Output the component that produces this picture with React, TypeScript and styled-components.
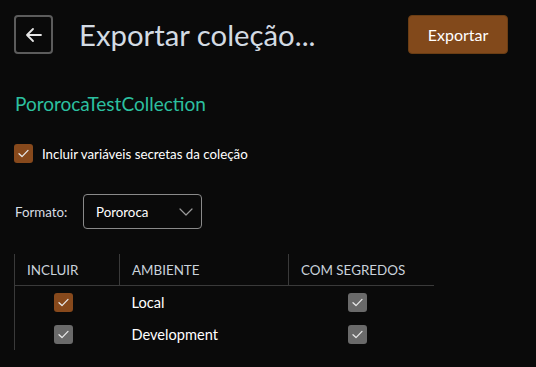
import React from "react";
import styled, { createGlobalStyle } from "styled-components";

const GlobalStyle = createGlobalStyle`
  html, body {
    margin: 0;
    padding: 0;
    background: #0a0a0a;
  }
  body {
    font-family: "Lato", "Noto Sans", sans-serif;
    color: #f2f2f2;
  }
`;

const Page = styled.div`
  width: 536px;
  height: 367px;
  box-sizing: border-box;
  padding: 15px 28px 0 14px;
  background: #0a0a0a;
  overflow: hidden;
`;

const Header = styled.div`
  display: flex;
  align-items: center;
  height: 39px;
`;

const BackButton = styled.button`
  width: 39px;
  height: 39px;
  box-sizing: border-box;
  border: 2px solid #5c5c5c;
  border-radius: 4px;
  background: transparent;
  display: flex;
  align-items: center;
  justify-content: center;
  padding: 0;
  cursor: pointer;
`;

const Title = styled.h1`
  margin: 0 0 0 26px;
  font-size: 29.3px;
  font-weight: 400;
  color: #d3dbe3;
  flex: 1;
`;

const PrimaryButton = styled.button`
  width: 100px;
  height: 39px;
  border: 1px solid #6a3d14;
  border-radius: 4px;
  background: #82491b;
  color: #ffffff;
  font-family: "Lato", sans-serif;
  font-size: 16px;
  cursor: pointer;
`;

const CollectionName = styled.div`
  margin-top: 38px;
  margin-left: 1px;
  font-size: 19px;
  color: #2cc0a0;
`;

const CheckRow = styled.label`
  display: flex;
  align-items: center;
  gap: 9px;
  margin-top: 29px;
  font-size: 13.3px;
  color: #ffffff;
`;

const Box = styled.span<{ $tone: "orange" | "gray"; $size: number }>`
  display: inline-flex;
  align-items: center;
  justify-content: center;
  width: ${(p) => p.$size}px;
  height: ${(p) => p.$size}px;
  border-radius: 3px;
  background: ${(p) => (p.$tone === "orange" ? "#87491c" : "#6a6a6a")};
  flex-shrink: 0;
  vertical-align: middle;
`;

const FormatRow = styled.div`
  display: flex;
  align-items: center;
  margin-top: 31px;
`;

const FormatLabel = styled.span`
  font-size: 13.3px;
  color: #d8dde2;
  margin-left: 1px;
  width: 68px;
`;

const Select = styled.div`
  width: 119px;
  height: 35px;
  box-sizing: border-box;
  border: 1px solid #8a8a8a;
  border-radius: 4px;
  display: flex;
  align-items: center;
  justify-content: space-between;
  padding: 0 8px 0 12px;
  font-size: 13.3px;
  color: #ffffff;
`;

const Table = styled.table`
  margin-top: 25px;
  border-collapse: collapse;
  table-layout: fixed;
  width: 419px;
  border-left: 1px solid #3a3a3a;
`;

const Th = styled.th`
  height: 31px;
  padding: 0 0 0 12px;
  text-align: left;
  font-weight: 400;
  font-size: 13.4px;
  color: #c9d2db;
  border-bottom: 1px solid #3a3a3a;
  & + & {
    border-left: 1px solid #3a3a3a;
  }
`;

const Td = styled.td<{ $center?: boolean }>`
  height: 32px;
  padding: ${(p) => (p.$center ? "0 7px 0 0" : "0 0 0 12px")};
  text-align: ${(p) => (p.$center ? "center" : "left")};
  vertical-align: middle;
  font-size: 14.6px;
  color: #ffffff;
`;

const Check = ({ color = "#e8e8e8" }: { color?: string }) => (
  <svg width="11" height="9" viewBox="0 0 11 9" fill="none">
    <path d="M1 4.8 L4 7.6 L10 1.4" stroke={color} strokeWidth="1.3" strokeLinecap="round" strokeLinejoin="round" />
  </svg>
);

const rows = [
  { name: "Local", include: true },
  { name: "Development", include: false },
];

export default function App() {
  return (
    <>
      <GlobalStyle />
      <Page>
        <Header>
          <BackButton aria-label="Voltar">
            <svg width="18" height="16" viewBox="0 0 18 16" fill="none">
              <path d="M16 8 H2 M8 2 L2 8 L8 14" stroke="#e6e6e6" strokeWidth="1.8" strokeLinecap="round" strokeLinejoin="round" />
            </svg>
          </BackButton>
          <Title>Exportar coleção...</Title>
          <PrimaryButton>Exportar</PrimaryButton>
        </Header>

        <CollectionName>PororocaTestCollection</CollectionName>

        <CheckRow>
          <Box $tone="orange" $size={19}>
            <Check />
          </Box>
          Incluir variáveis secretas da coleção
        </CheckRow>

        <FormatRow>
          <FormatLabel>Formato:</FormatLabel>
          <Select>
            Pororoca
            <svg width="14" height="8" viewBox="0 0 14 8" fill="none">
              <path d="M1 1 L7 7 L13 1" stroke="#9a9a9a" strokeWidth="1.2" strokeLinecap="round" strokeLinejoin="round" />
            </svg>
          </Select>
        </FormatRow>

        <Table>
          <colgroup>
            <col style={{ width: 105 }} />
            <col style={{ width: 169 }} />
            <col style={{ width: 145 }} />
          </colgroup>
          <thead>
            <tr>
              <Th>INCLUIR</Th>
              <Th>AMBIENTE</Th>
              <Th>COM SEGREDOS</Th>
            </tr>
          </thead>
          <tbody>
            {rows.map((r) => (
              <tr key={r.name}>
                <Td $center>
                  <Box $tone={r.include ? "orange" : "gray"} $size={19}>
                    <Check />
                  </Box>
                </Td>
                <Td>{r.name}</Td>
                <Td $center>
                  <Box $tone="gray" $size={19}>
                    <Check />
                  </Box>
                </Td>
              </tr>
            ))}
          </tbody>
        </Table>
      </Page>
    </>
  );
}
